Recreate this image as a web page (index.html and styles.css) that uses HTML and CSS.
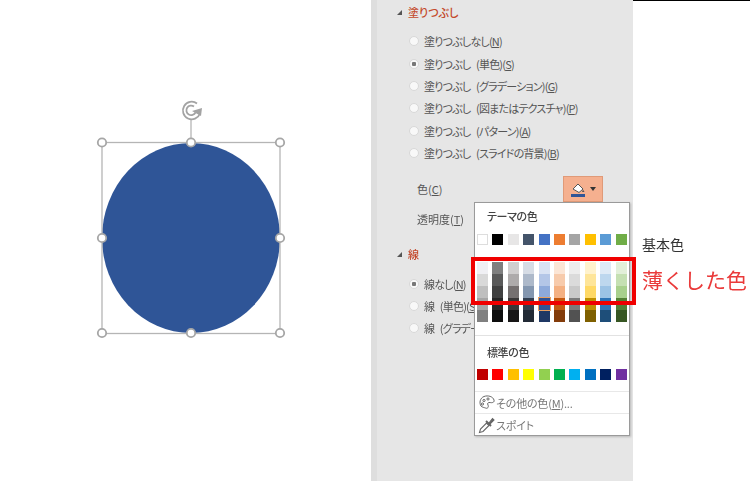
FILE: index.html
```html
<!DOCTYPE html>
<html lang="ja">

<head>
    <meta charset="UTF-8">
    <title>薄くした色</title>
    <link rel="stylesheet" href="styles.css">
</head>

<body>
    <div class="page">
        <div class="canvas">
            <svg class="shape" width="371" height="481" viewBox="0 0 371 481">
                <ellipse cx="191" cy="238" rx="89" ry="95" fill="#2f5597" />
                <g fill="none" stroke="#b5b5b5" stroke-width="1.3">
                    <rect x="102" y="142.500" width="178" height="191" />
                    <line x1="191" y1="120" x2="191" y2="142" />
                </g>
                <g fill="#fff" stroke="#a6a6a6" stroke-width="1.8">
                    <circle cx="102" cy="142.500" r="4.200" />
                    <circle cx="191" cy="142.500" r="4.200" />
                    <circle cx="280" cy="142.500" r="4.200" />
                    <circle cx="102" cy="238" r="4.200" />
                    <circle cx="280" cy="238" r="4.200" />
                    <circle cx="102" cy="333" r="4.200" />
                    <circle cx="191" cy="333" r="4.200" />
                    <circle cx="280" cy="333" r="4.200" />
                </g>
                <g fill="none" stroke="#a3a3a3" stroke-width="1.8">
                    <path d="M197 103.500a8.800 8.800 0 1 0 3 10" />
                    <path d="M194 106.500a4.800 4.800 0 1 0 1.500 6" />
                </g>
                <path d="M192 111l10-3-1 8z" fill="#a3a3a3" />
            </svg>
        </div>

        <div class="panel">
            <h3 class="head"><span class="tri"></span>塗りつぶし</h3>
            <ul class="opts">
                <li><span class="radio"></span><span>塗りつぶしなし(<u>N</u>)</span></li>
                <li><span class="radio on"></span><span>塗りつぶし (単色)(<u>S</u>)</span></li>
                <li><span class="radio"></span><span>塗りつぶし (グラデーション)(<u>G</u>)</span></li>
                <li><span class="radio"></span><span>塗りつぶし (図またはテクスチャ)(<u>P</u>)</span></li>
                <li><span class="radio"></span><span>塗りつぶし (パターン)(<u>A</u>)</span></li>
                <li><span class="radio"></span><span>塗りつぶし (スライドの背景)(<u>B</u>)</span></li>
            </ul>
            <div class="field">
                <span>色(<u>C</u>)</span>
                <button class="colorbtn">
                    <svg width="16" height="16" viewBox="0 0 16 16">
                        <path d="M3 8l5-5 5 5-4 3.500z" fill="#fff" stroke="#555" stroke-width="1" />
                        <path d="M13 8.500l1.500 2.500h-2.500z" fill="#555" />
                        <rect x="1" y="13" width="14" height="3" fill="#2f5597" />
                    </svg>
                    <span class="caret"></span>
                </button>
            </div>
            <div class="field">
                <span>透明度(<u>T</u>)</span>
            </div>
            <h3 class="head head-line"><span class="tri"></span>線</h3>
            <ul class="opts">
                <li><span class="radio on"></span><span>線なし(<u>N</u>)</span></li>
                <li><span class="radio"></span><span>線 (単色)(<u>S</u>)</span></li>
                <li><span class="radio"></span><span>線 (グラデーション)(<u>G</u>)</span></li>
            </ul>
        </div>

        <div class="side"></div>

        <div class="popup">
            <p class="title">テーマの色</p>
            <div class="swatches theme">
                <i class="c-ffffff edge"></i><i class="c-000000"></i><i class="c-e7e6e6"></i><i class="c-44546a"></i><i class="c-4472c4"></i><i class="c-ed7d31"></i><i class="c-a5a5a5"></i><i class="c-ffc000"></i><i class="c-5b9bd5"></i><i class="c-70ad47"></i>
            </div>
            <div class="shades">
                <div class="shade"><i class="c-f0f0f4"></i><i class="c-d9d9d9"></i><i class="c-bfbfbf"></i><i class="c-a6a6a6"></i><i class="c-808080"></i></div>
                <div class="shade"><i class="c-7f7f7f"></i><i class="c-595959"></i><i class="c-404040"></i><i class="c-262626"></i><i class="c-0d0d0d"></i></div>
                <div class="shade"><i class="c-d0cece"></i><i class="c-aeabab"></i><i class="c-757070"></i><i class="c-3a3838"></i><i class="c-171616"></i></div>
                <div class="shade"><i class="c-d6dce5"></i><i class="c-adb9ca"></i><i class="c-8497b0"></i><i class="c-333f50"></i><i class="c-222a35"></i></div>
                <div class="shade"><i class="c-d9e2f3"></i><i class="c-b4c6e7"></i><i class="c-8eaadb"></i><i class="c-2f5496 picked"></i><i class="c-1f3864"></i></div>
                <div class="shade"><i class="c-fbe5d5"></i><i class="c-f7cbac"></i><i class="c-f4b183"></i><i class="c-c55a11"></i><i class="c-833c0b"></i></div>
                <div class="shade"><i class="c-ededed"></i><i class="c-dbdbdb"></i><i class="c-c9c9c9"></i><i class="c-7b7b7b"></i><i class="c-525252"></i></div>
                <div class="shade"><i class="c-fff2cc"></i><i class="c-fee599"></i><i class="c-ffd966"></i><i class="c-bf9000"></i><i class="c-7f6000"></i></div>
                <div class="shade"><i class="c-deeaf6"></i><i class="c-bdd7ee"></i><i class="c-9cc3e5"></i><i class="c-2e74b5"></i><i class="c-1e4e79"></i></div>
                <div class="shade"><i class="c-e2efd9"></i><i class="c-c5e0b3"></i><i class="c-a8d08d"></i><i class="c-538135"></i><i class="c-375623"></i></div>
            </div>
            <p class="title title-std">標準の色</p>
            <div class="swatches std">
                <i class="c-c00000"></i><i class="c-ff0000"></i><i class="c-ffc000"></i><i class="c-ffff00"></i><i class="c-92d050"></i><i class="c-00b050"></i><i class="c-00b0f0"></i><i class="c-0070c0"></i><i class="c-002060"></i><i class="c-7030a0"></i>
            </div>
            <div class="menuitem first">
                <svg width="18" height="18" viewBox="0 0 18 18" fill="none" stroke="#666" stroke-width="1">
                    <path d="M3 12c-2-3-1-8 3-9.500 4-1.500 9 0 10 3.500 .7 2.500-2 3-4 2.500-2-.4-3 1-2 2.500 1 2-.5 4-2.500 3-1.500-.6-3-.5-4.500-2z" />
                    <circle cx="6" cy="6.500" r="1.100" />
                    <circle cx="10" cy="5" r="1.100" />
                    <circle cx="4.500" cy="10" r="1.100" />
                </svg>
                <span>その他の色(<u>M</u>)...</span>
            </div>
            <div class="menuitem">
                <svg width="18" height="18" viewBox="0 0 18 18" fill="none" stroke="#666" stroke-width="1.100">
                    <path d="M1.500 16.500l1-3.500 6-6 2.500 2.500-6 6z" />
                    <path d="M8 5l5 5" stroke-width="2" />
                    <path d="M11 7l3.500-4.500 1.500 1.500-4.500 4.500z" fill="#666" />
                </svg>
                <span>スポイト</span>
            </div>
        </div>

        <div class="redbox"></div>
        <span class="note note-base">基本色</span>
        <span class="note note-tint">薄くした色</span>
    </div>
</body>

</html>
```

FILE: styles.css
```css
* {
    margin: 0;
    padding: 0;
    box-sizing: border-box;
}

ul {
    list-style: none;
}

body {
    background-color: #fff;
    font-family: "Noto Sans CJK JP", "Liberation Sans", sans-serif;
    font-feature-settings: "palt";
    color: #555;
    overflow: hidden;
}

.page {
    width: 750px;
    height: 481px;
    display: flex;
    position: relative;
    overflow: hidden;
    filter: blur(0.35px);
}

.canvas {
    width: 371px;
    flex: none;
}

.shape {
    display: block;
}

/* 右側のパネル */
.panel {
    width: 262px;
    flex: none;
    background-color: #e6e6e6;
    border-left: 6px solid #dedede;
    font-size: 11px;
}

.side {
    flex: 1;
    border-top: 1px solid #000;
}

.head {
    height: 24px;
    margin-bottom: 6px;
    padding-left: 20px;
    display: flex;
    align-items: center;
    gap: 6px;
    font-size: 11px;
    font-weight: 500;
    color: #c4492b;
}

.head-line {
    margin-top: 8px;
}

.tri {
    width: 0;
    height: 0;
    border-left: 5px solid transparent;
    border-bottom: 5px solid #555;
}

.opts li {
    height: 22.400px;
    padding-left: 32px;
    display: flex;
    align-items: center;
    gap: 5px;
    white-space: nowrap;
    letter-spacing: -0.8px;
    word-spacing: 4px;
}

.radio {
    width: 10px;
    height: 10px;
    flex: none;
    border-radius: 50%;
    background-color: #f8f8f8;
    border: 1px solid #d8d8d8;
}

.radio.on {
    background: radial-gradient(circle, #777 0 2px, #f8f8f8 2.500px);
}

.field {
    height: 30px;
    padding-left: 40px;
    padding-right: 30px;
    display: flex;
    align-items: center;
    justify-content: space-between;
}

.opts + .field {
    margin-top: 10px;
}

.colorbtn {
    width: 40px;
    height: 26px;
    display: flex;
    align-items: center;
    justify-content: center;
    gap: 4px;
    background-color: #f5b08f;
    border: 1px solid #e09a78;
}

.caret {
    width: 0;
    height: 0;
    border-left: 3px solid transparent;
    border-right: 3px solid transparent;
    border-top: 4px solid #333;
}

/* カラーパレット */
.popup {
    position: absolute;
    left: 474px;
    top: 202px;
    width: 156px;
    height: 234px;
    background-color: #fff;
    border: 1px solid #9a9a9a;
    box-shadow: 1px 1px 2px rgba(0, 0, 0, 0.2);
    font-size: 11px;
}

.title {
    height: 26px;
    padding-left: 12px;
    line-height: 26px;
    font-weight: 500;
    color: #444;
    letter-spacing: -0.4px;
}

.swatches,
.shades {
    display: flex;
    gap: 4.400px;
    padding-left: 2px;
}

.swatches {
    margin-top: 5px;
}

.swatches i {
    width: 11px;
    height: 11px;
    display: block;
}

.shades {
    margin-top: 17px;
    padding-bottom: 13px;
    border-bottom: 1px solid #e2e2e2;
}

.shade {
    width: 11px;
}

.shade i {
    height: 12px;
    display: block;
}

.title-std {
    margin-top: 3px;
}

.std {
    margin-top: 4px;
}

.edge {
    border: 1px solid #ddd;
}

.picked {
    outline: 1px solid #e8a060;
}

.menuitem {
    height: 22px;
    padding-left: 3px;
    display: flex;
    align-items: center;
    gap: 0;
    color: #777;
    border-top: 1px solid #e8e8e8;
    letter-spacing: -0.2px;
}

.menuitem.first {
    margin-top: 11px;
}

/* 注釈 */
.redbox {
    position: absolute;
    left: 471px;
    top: 257px;
    width: 165px;
    height: 48px;
    border: 4px solid #f00000;
}

.note {
    position: absolute;
    left: 642px;
    white-space: nowrap;
    font-feature-settings: normal;
}

.note-base {
    top: 234px;
    font-size: 14px;
    line-height: 20px;
    color: #333;
}

.note-tint {
    top: 265px;
    font-size: 21px;
    line-height: 28px;
    color: #ea3a3a;
}

.c-ffffff { background-color: #ffffff; }
.c-000000 { background-color: #000000; }
.c-e7e6e6 { background-color: #e7e6e6; }
.c-44546a { background-color: #44546a; }
.c-4472c4 { background-color: #4472c4; }
.c-ed7d31 { background-color: #ed7d31; }
.c-a5a5a5 { background-color: #a5a5a5; }
.c-ffc000 { background-color: #ffc000; }
.c-5b9bd5 { background-color: #5b9bd5; }
.c-70ad47 { background-color: #70ad47; }
.c-f0f0f4 { background-color: #f0f0f4; }
.c-d9d9d9 { background-color: #d9d9d9; }
.c-bfbfbf { background-color: #bfbfbf; }
.c-a6a6a6 { background-color: #a6a6a6; }
.c-808080 { background-color: #808080; }
.c-7f7f7f { background-color: #7f7f7f; }
.c-595959 { background-color: #595959; }
.c-404040 { background-color: #404040; }
.c-262626 { background-color: #262626; }
.c-0d0d0d { background-color: #0d0d0d; }
.c-d0cece { background-color: #d0cece; }
.c-aeabab { background-color: #aeabab; }
.c-757070 { background-color: #757070; }
.c-3a3838 { background-color: #3a3838; }
.c-171616 { background-color: #171616; }
.c-d6dce5 { background-color: #d6dce5; }
.c-adb9ca { background-color: #adb9ca; }
.c-8497b0 { background-color: #8497b0; }
.c-333f50 { background-color: #333f50; }
.c-222a35 { background-color: #222a35; }
.c-d9e2f3 { background-color: #d9e2f3; }
.c-b4c6e7 { background-color: #b4c6e7; }
.c-8eaadb { background-color: #8eaadb; }
.c-2f5496 { background-color: #2f5496; }
.c-1f3864 { background-color: #1f3864; }
.c-fbe5d5 { background-color: #fbe5d5; }
.c-f7cbac { background-color: #f7cbac; }
.c-f4b183 { background-color: #f4b183; }
.c-c55a11 { background-color: #c55a11; }
.c-833c0b { background-color: #833c0b; }
.c-ededed { background-color: #ededed; }
.c-dbdbdb { background-color: #dbdbdb; }
.c-c9c9c9 { background-color: #c9c9c9; }
.c-7b7b7b { background-color: #7b7b7b; }
.c-525252 { background-color: #525252; }
.c-fff2cc { background-color: #fff2cc; }
.c-fee599 { background-color: #fee599; }
.c-ffd966 { background-color: #ffd966; }
.c-bf9000 { background-color: #bf9000; }
.c-7f6000 { background-color: #7f6000; }
.c-deeaf6 { background-color: #deeaf6; }
.c-bdd7ee { background-color: #bdd7ee; }
.c-9cc3e5 { background-color: #9cc3e5; }
.c-2e74b5 { background-color: #2e74b5; }
.c-1e4e79 { background-color: #1e4e79; }
.c-e2efd9 { background-color: #e2efd9; }
.c-c5e0b3 { background-color: #c5e0b3; }
.c-a8d08d { background-color: #a8d08d; }
.c-538135 { background-color: #538135; }
.c-375623 { background-color: #375623; }
.c-c00000 { background-color: #c00000; }
.c-ff0000 { background-color: #ff0000; }
.c-ffff00 { background-color: #ffff00; }
.c-92d050 { background-color: #92d050; }
.c-00b050 { background-color: #00b050; }
.c-00b0f0 { background-color: #00b0f0; }
.c-0070c0 { background-color: #0070c0; }
.c-002060 { background-color: #002060; }
.c-7030a0 { background-color: #7030a0; }
```
